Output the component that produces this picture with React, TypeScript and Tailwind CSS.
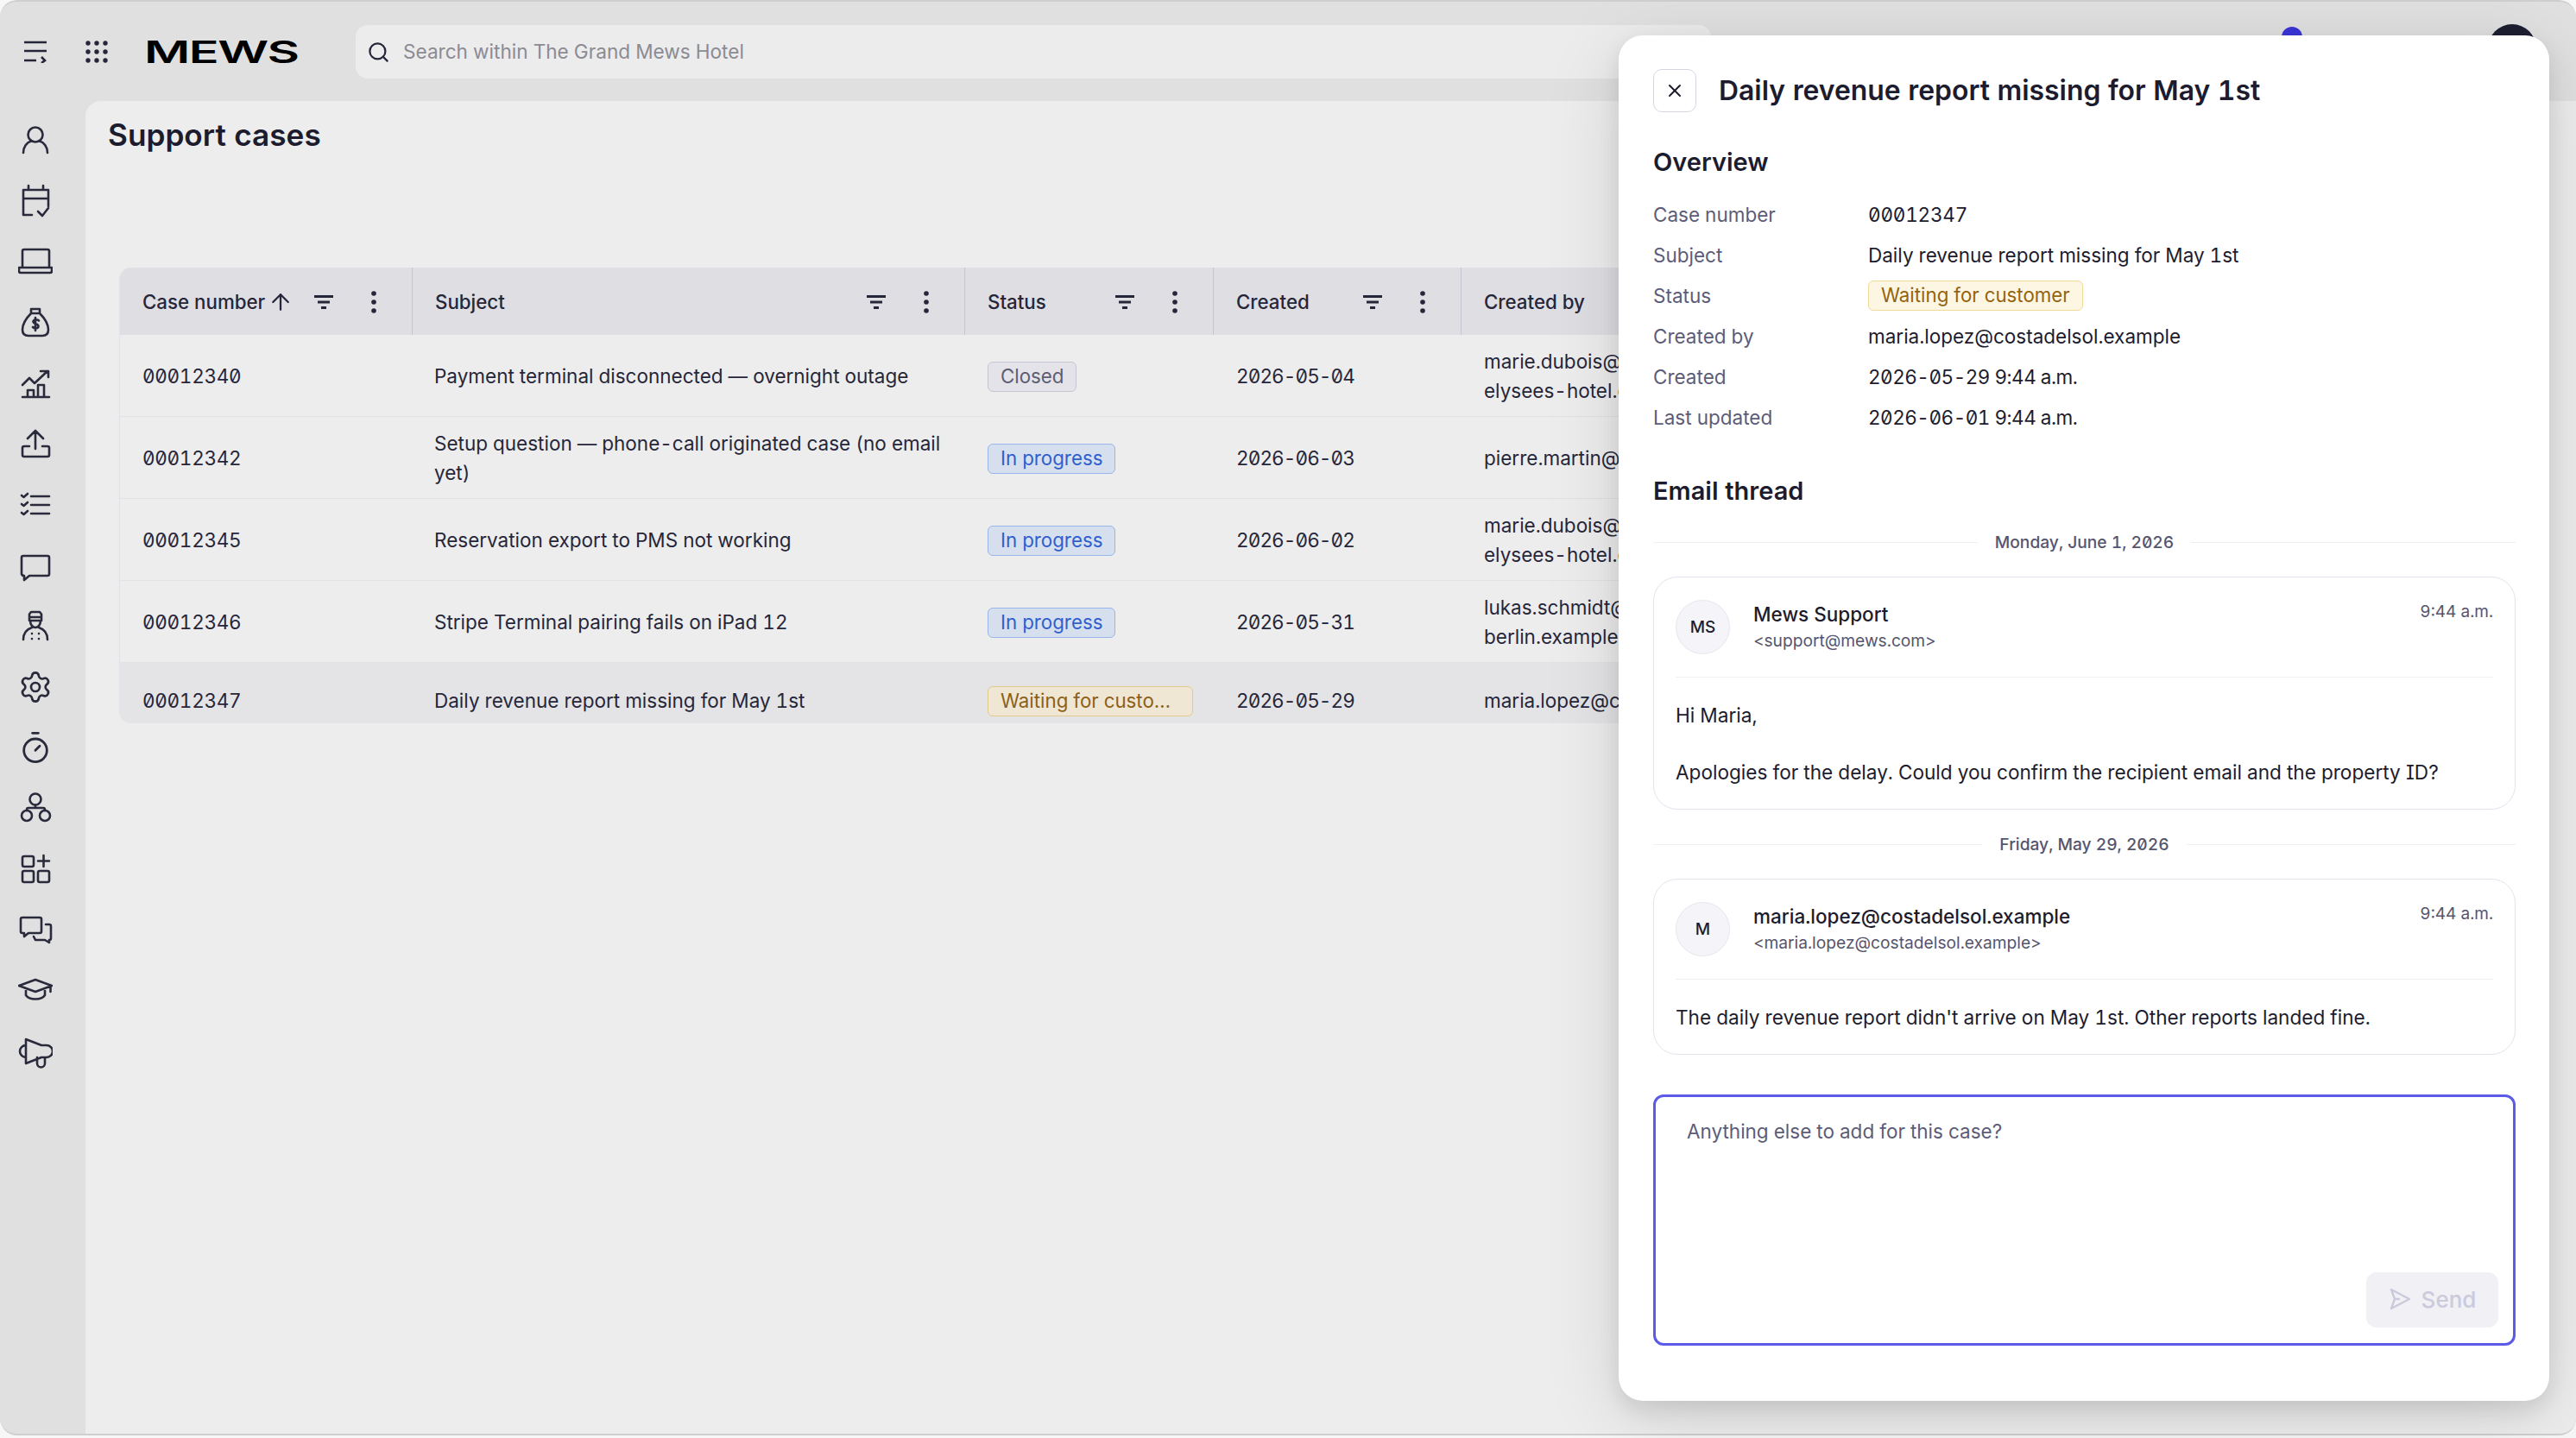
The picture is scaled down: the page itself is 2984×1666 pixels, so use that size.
import { ArrowUp, Search, Settings, Timer, X } from "lucide-react";
import type { ReactNode } from "react";

const nav: ReactNode[] = [
  <><circle cx="20" cy="14" r="8.5" /><path d="M6 35c0-7 4-12 9-13.500M34 35c0-7-4-12-9-13.500" /></>,
  <><path d="M16 36H6V7h29v19M6 17h29M12 2v5M29 2v5M23 32l5 5 7-9" /></>,
  <><path d="M5 27V8a2 2 0 0 1 2-2h27a2 2 0 0 1 2 2v19M1 27h38v4a2 2 0 0 1-2 2H3a2 2 0 0 1-2-2z" /></>,
  <><path d="M15 5h10v5H15zM15 10C9 16 5 23 5 29c0 5 3 7 7 7h16c4 0 7-2 7-7 0-6-4-13-10-19M24 18.500c-1-1.500-6-2-6.500 1 0 3 6 2.500 6 5.500 0 3-5 2.500-6.500 1M20 15v15" /></>,
  <><path d="M5 36h31M11 36v-8h7v8M23 36V22h7v14M5 22l8-8 6 6 15-14M26 6h9v7" /></>,
  <><path d="M20 26V5M11 14l9-9 9 9M13 23H7a2 2 0 0 0-2 2v8a2 2 0 0 0 2 2h27a2 2 0 0 0 2-2v-8a2 2 0 0 0-2-2h-6" /></>,
  <><path d="M15 10h21M15 20h21M15 30h21M4 9l2.500 2L11 7M4 19l2.500 2L11 17M4 29l2.500 2L11 27" /></>,
  <><path d="M6 9h28a2 2 0 0 1 2 2v19a2 2 0 0 1-2 2H13l-6 5v-5a3 3 0 0 1-3-2V11a2 2 0 0 1 2-2z" /></>,
  <><path d="M13 6.500 15 4h10l2 2.500V14H13zM13 10h14M14 14c0 5 3 8 6 8s6-3 6-8M6 36c0-7 4-12 10-14M34 36c0-7-4-12-10-14" /><path d="M16 29v.1M24 29v.1M16 35v.1M24 35v.1" /></>,
  null,
  null,
  <><circle cx="20" cy="10" r="6.500" /><ellipse cx="10" cy="29" rx="6" ry="6" /><ellipse cx="31" cy="29" rx="6" ry="6" /><path d="M20 17v3M10 23v-1a2 2 0 0 1 2-2h17a2 2 0 0 1 2 2v1" /></>,
  <><rect x="5" y="5" width="13" height="12" rx="2" /><rect x="5" y="22" width="13" height="13" rx="2" /><rect x="23" y="22" width="13" height="13" rx="2" /><path d="M29.500 4v13M23 10.500h13" /></>,
  <><path d="M3 8a2 2 0 0 1 2-2h20a2 2 0 0 1 2 2v14a2 2 0 0 1-2 2H12l-5 4v-4H5a2 2 0 0 1-2-2zM32 14h4a2 2 0 0 1 2 2v14a2 2 0 0 1-2 2v3l-5-3H20l-2-4" /></>,
  <><path d="M1 14l19-7 19 7-19 7zM9 19v6c4 6 18 6 22 0v-6M37.500 14v7" /></>,
  <><path d="M9 6l18 7h6a7 7 0 0 1 0 14h-6L9 34zM9 13a7 7 0 0 0 0 14M22 27v7a4 4 0 0 0 9 0v-7" /></>,
];

const rows = [
  { id: "00012340", subject: "Payment terminal disconnected — overnight outage", status: "Closed", created: "2026-05-04", by: ["marie.dubois@champs-", "elysees-hotel.example"] },
  { id: "00012342", subject: "Setup question — phone-call originated case (no email yet)", status: "In progress", created: "2026-06-03", by: ["pierre.martin@louvre.example"] },
  { id: "00012345", subject: "Reservation export to PMS not working", status: "In progress", created: "2026-06-02", by: ["marie.dubois@champs-", "elysees-hotel.example"] },
  { id: "00012346", subject: "Stripe Terminal pairing fails on iPad 12", status: "In progress", created: "2026-05-31", by: ["lukas.schmidt@hotel-", "berlin.example"] },
  { id: "00012347", subject: "Daily revenue report missing for May 1st", status: "Waiting for customer", created: "2026-05-29", by: ["maria.lopez@costadelsol.example"] },
];

const overview = [
  ["Case number", "00012347"],
  ["Subject", "Daily revenue report missing for May 1st"],
  ["Status", ""],
  ["Created by", "maria.lopez@costadelsol.example"],
  ["Created", "2026-05-29 9:44 a.m."],
  ["Last updated", "2026-06-01 9:44 a.m."],
];

function FilterIcon() {
  return (
    <svg width="26" height="16" viewBox="0 0 26 16" className="shrink-0 text-[#26263a]" fill="none" stroke="currentColor" strokeWidth="3">
      <path d="M2 1.500h22M6 8h14M10 14.500h6" />
    </svg>
  );
}

function DotsIcon() {
  return (
    <svg width="32" height="30" viewBox="0 0 32 30" className="shrink-0 text-[#26263a]" fill="currentColor">
      <circle cx="16" cy="5" r="2.800" />
      <circle cx="16" cy="15" r="2.800" />
      <circle cx="16" cy="25" r="2.800" />
    </svg>
  );
}

function HeaderCell({ label, sorted, plain }: { label: string; sorted?: boolean; plain?: boolean }) {
  return (
    <div className="h-[78px] flex items-center pl-[26px] pr-[28px] pt-[1px] border-r border-[#c6c6d4] last:border-r-0 text-[22.300px] font-medium text-[#26263a]">
      <span>{label}</span>
      {sorted && <ArrowUp size={30} strokeWidth={1.800} className="ml-[3px]" />}
      {!plain && (
        <div className="ml-auto flex items-center gap-[29px]">
          <FilterIcon />
          <DotsIcon />
        </div>
      )}
    </div>
  );
}

function StatusBadge({ status, clip }: { status: string; clip?: boolean }) {
  const tone =
    status === "Closed"
      ? "bg-[#e3e3e9] border-[#c6c6d2] text-[#5d5d72]"
      : status === "In progress"
        ? "bg-[#d6dfee] border-[#98b6ea] text-[#2f5fcf]"
        : clip
          ? "bg-[#efe7d4] border-[#e2c98c] text-[#8d6018]"
          : "bg-[#fdf6e3] border-[#f1d998] text-[#94640f]";
  return (
    <span className={`inline-block h-[35px] leading-[32px] px-[14px] rounded-[6px] border text-[22.300px] ${tone} ${clip ? "max-w-[238px] truncate align-middle" : ""}`}>
      {status}
    </span>
  );
}

function DateLine({ label }: { label: string }) {
  return (
    <div className="flex items-center gap-[20px] h-[28px]">
      <div className="flex-1 h-px bg-[#eeeef3]" />
      <span className="text-[19.200px] leading-[28px] font-medium text-[#55556e]">{label}</span>
      <div className="flex-1 h-px bg-[#eeeef3]" />
    </div>
  );
}

function Mail({ initials, name, email, children }: { initials: string; name: string; email: string; children: ReactNode }) {
  return (
    <div className="mt-[26px] rounded-[28px] border border-[#e3e3ee] px-[25px] pt-[26px] pb-[26px]">
      <div className="flex pb-[26px] border-b border-[#eeeef3]">
        <div className="w-[63px] h-[63px] pt-[1px] rounded-full bg-[#f5f5f9] border border-[#e6e6ee] flex items-center justify-center text-[19px] font-medium text-[#1c1c2e]">
          {initials}
        </div>
        <div className="ml-[27px] flex-1">
          <p className="text-[22.500px] leading-[33px] font-medium text-[#1c1c2e]">{name}</p>
          <p className="text-[19.200px] leading-[28px] text-[#55556e]">{email}</p>
        </div>
        <span className="text-[19px] leading-[28px] text-[#55556e]">9:44 a.m.</span>
      </div>
      <div className="mt-[27px] text-[22.600px] leading-[33px] text-[#1c1c2e]">{children}</div>
    </div>
  );
}

export default function App() {
  return (
    <div className="relative w-[2984px] h-[1666px] bg-[#f7f7f7] overflow-hidden font-['Inter',sans-serif] tabular-nums slashed-zero">
      <div className="h-[1663px] flex flex-col rounded-[20px] border-y-2 border-[#cfcfcf] bg-[#e0e0e0] overflow-hidden">
        <header className="h-[115px] shrink-0 flex items-start pt-[27px]">
          <div className="w-[99px] pr-[17px] h-[62px] flex items-center justify-center">
            <svg width="28" height="26" viewBox="0 0 28 26" fill="none" stroke="#26263a" strokeWidth="2.600">
              <path d="M1 2h26M1 12h26M1 23h14M21 19l4 4-4 3" />
            </svg>
          </div>
          <svg width="26" height="26" viewBox="0 0 26 26" fill="#26263a" className="mt-[18px] shrink-0">
            {[3, 13, 23].map((y) =>
              [3, 13, 23].map((x) => <circle key={`${x}-${y}`} cx={x} cy={y} r="2.700" />),
            )}
          </svg>
          <div className="w-[187px] ml-[42px] h-[62px] flex items-center overflow-visible">
            <span className="origin-left scale-x-[1.650] text-[35px] leading-none font-semibold text-black tracking-tight">MEWS</span>
          </div>
          <div className="ml-[58px] w-[1570px] h-[62px] rounded-[14px] bg-[#ececec] flex items-center pl-[13px]">
            <Search size={27} strokeWidth={2} className="text-[#26263a]" />
            <span className="ml-[15px] text-[22.600px] text-[#8b8b93]">Search within The Grand Mews Hotel</span>
          </div>
        </header>
        <div className="flex-1 flex min-h-0">
          <nav className="w-[99px] pr-[17px] shrink-0 pt-[10px] text-[#2a2a3d]">
            {nav.map((icon, i) => (
              <div key={i} className="h-[70.400px] flex items-center justify-center">
                {i === 9 ? (
                  <Settings size={40} strokeWidth={1.600} />
                ) : i === 10 ? (
                  <Timer size={40} strokeWidth={1.700} />
                ) : (
                  <svg width="40" height="40" viewBox="0 0 40 40" fill="none" stroke="currentColor" strokeWidth="2.600" strokeLinecap="round" strokeLinejoin="round">
                    {icon}
                  </svg>
                )}
              </div>
            ))}
          </nav>
          <main className="flex-1 rounded-tl-[18px] bg-[#ededed] pl-[26px] pr-[32px]">
            <h1 className="mt-[16px] text-[35.200px] leading-[46px] font-semibold text-[#1c1c2e]">Support cases</h1>
            <div className="mt-[131px] ml-[13px] h-[528px] overflow-hidden rounded-[14px] border-l border-[#e2e2e8] text-[22.500px] text-[#26263a]">
              <div className="grid grid-cols-[339px_640px_288px_287px_1fr] bg-[#dedee3]">
                <HeaderCell label="Case number" sorted />
                <HeaderCell label="Subject" />
                <HeaderCell label="Status" />
                <HeaderCell label="Created" />
                <HeaderCell label="Created by" plain />
              </div>
              {rows.map((row, i) => (
                <div
                  key={row.id}
                  className={`grid grid-cols-[339px_640px_288px_287px_1fr] items-center border-b border-[#e1e1e6] pt-[2px] leading-[34px] ${i === 4 ? "h-[86px] bg-[#e4e4e6]" : "h-[95px]"}`}
                >
                  <div className="pl-[26px] tracking-[-0.3px]">{row.id}</div>
                  <div className="pl-[25px] pr-[14px]">{row.subject}</div>
                  <div className="pl-[26px] min-w-0">
                    <StatusBadge status={row.status} clip={i === 4} />
                  </div>
                  <div className="pl-[26px] tracking-[-0.9px]">{row.created}</div>
                  <div className="pl-[26px]">
                    {row.by.map((line) => (
                      <div key={line}>{line}</div>
                    ))}
                  </div>
                </div>
              ))}
            </div>
          </main>
        </div>
      </div>

      <div className="absolute left-[2643px] top-[31px] w-[24px] h-[24px] rounded-full bg-[#3a35d8]" />
      <div className="absolute left-[2882px] top-[28px] w-[56px] h-[56px] rounded-full bg-[#1f1f33]" />

      <aside className="absolute left-[1875px] top-[41px] w-[1078px] h-[1582px] rounded-[28px] bg-white pl-[40px] pr-[39px] pt-[39px] shadow-[0_10px_24px_rgba(0,0,0,0.10),0_20px_90px_rgba(0,0,0,0.12)]">
        <div className="flex items-center">
          <button className="w-[50px] h-[50px] rounded-[10px] border border-[#d6d6e2] flex items-center justify-center text-[#1c1c2e]">
            <X size={24} strokeWidth={2} />
          </button>
          <h2 className="ml-[26px] text-[31.900px] leading-[44px] font-semibold text-[#1c1c2e]">Daily revenue report missing for May 1st</h2>
        </div>

        <h3 className="mt-[40px] text-[29px] leading-[36px] font-semibold text-[#1c1c2e]">Overview</h3>
        <div className="mt-[19px] grid grid-cols-[249px_1fr] auto-rows-[47px] items-center text-[22.500px]">
          {overview.map(([label, value]) => (
            <div key={label} className="contents">
              <span className="text-[#5c5c78]">{label}</span>
              {label === "Status" ? (
                <div>
                  <StatusBadge status="Waiting for customer" />
                </div>
              ) : (
                <span className={`text-[#1c1c2e] ${value.includes("-") ? "tracking-[-0.5px]" : /^\d/.test(value) ? "tracking-[-0.2px]" : ""}`}>{value}</span>
              )}
            </div>
          ))}
        </div>

        <h3 className="mt-[44px] text-[29px] leading-[36px] font-semibold text-[#1c1c2e]">Email thread</h3>
        <div className="mt-[27px]">
          <DateLine label="Monday, June 1, 2026" />
          <Mail initials="MS" name="Mews Support" email="<support@mews.com>">
            <p>Hi Maria,</p>
            <p className="mt-[33px]">
              Apologies for the delay. Could you confirm the recipient email and the property <span className="[font-feature-settings:'cv08']">ID</span>?
            </p>
          </Mail>
          <div className="mt-[26px]">
            <DateLine label="Friday, May 29, 2026" />
          </div>
          <Mail initials="M" name="maria.lopez@costadelsol.example" email="<maria.lopez@costadelsol.example>">
            <p>The daily revenue report didn't arrive on May 1st. Other reports landed fine.</p>
          </Mail>
        </div>

        <div className="relative mt-[46px] h-[291px] rounded-[12px] border-[3px] border-[#5b5be8]">
          <textarea
            className="w-full h-full resize-none outline-none bg-transparent pl-[36px] pt-[23px] text-[22.500px] leading-[33px] placeholder:text-[#5c5c78]"
            placeholder="Anything else to add for this case?"
          />
          <button className="absolute right-[17px] bottom-[18px] w-[153px] h-[64px] rounded-[12px] bg-[#f0f0f5] flex items-center justify-center gap-[12px] pb-[2px] text-[26px] font-medium text-[#cbcadc]">
            <svg width="26" height="26" viewBox="0 0 26 26" fill="none" stroke="currentColor" strokeWidth="2.400" strokeLinejoin="round">
              <path d="M3 2l21 11L3 24l4-11zM7 13h6" />
            </svg>
            Send
          </button>
        </div>
      </aside>
    </div>
  );
}
